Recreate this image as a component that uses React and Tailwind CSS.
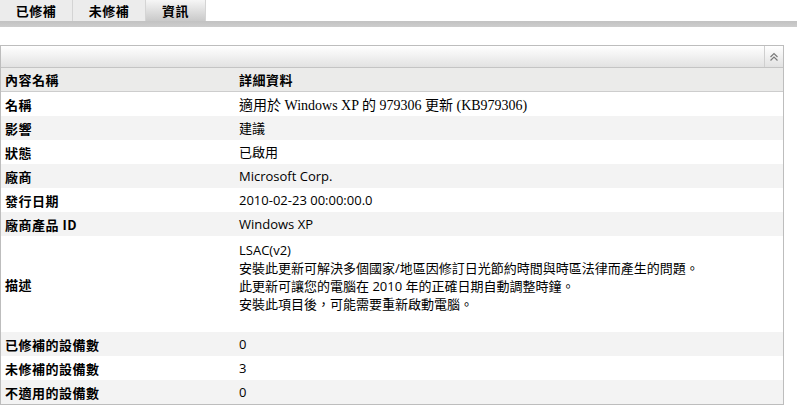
import React from "react";

const labelFont = { fontFamily: '"Noto Sans CJK TC", "Noto Sans", sans-serif' };

function Row({ label, children, shade, h = "h-[24px]", serif }) {
  return (
    <div className={`flex items-center ${h} ${shade ? "bg-[#f3f3f3]" : "bg-white"}`}>
      <div className="w-[238px] shrink-0 pl-[4px] text-[13px] font-bold tracking-[0.5px] text-black leading-none">
        {label}
      </div>
      <div
        className={`flex-1 text-black ${serif ? "pt-[3px] text-[14px] font-['Liberation_Serif','Noto_Sans_CJK_TC',serif]" : "text-[13px] font-['Open_Sans','Noto_Sans_CJK_TC',sans-serif]"} leading-none`}
      >
        {children}
      </div>
    </div>
  );
}

export default function App() {
  return (
    <div className="w-[797px] h-[409px] bg-white overflow-hidden" style={labelFont}>
      {/* tabs */}
      <div className="flex h-[21px]">
        <div className="w-[73px] flex items-center justify-center bg-[#ececec] border-r border-[#d4d4d4] text-[13px] font-bold tracking-[0.5px]">
          已修補
        </div>
        <div className="w-[73px] flex items-center justify-center bg-[#ececec] border-r border-[#d4d4d4] text-[13px] font-bold tracking-[0.5px]">
          未修補
        </div>
        <div className="w-[60px] flex items-center justify-center bg-gradient-to-b from-[#f6f6f6] to-[#c9c9c9] border-r border-[#d4d4d4] text-[13px] font-bold tracking-[0.5px]">
          資訊
        </div>
      </div>
      <div className="h-[6px] bg-gradient-to-b from-[#c2c2c2] to-[#cdcdcd]" />

      {/* panel */}
      <div className="mt-[18px] w-[784px] border border-[#bdbdbd]">
        <div className="flex h-[22px] bg-gradient-to-b from-[#ffffff] to-[#e2e2e2] border-b border-[#c4c4c4]">
          <div className="flex-1" />
          <div className="w-[19px] border-l border-[#cfcfcf] flex items-center justify-center">
            <svg width="10" height="10" viewBox="0 0 10 10" fill="none" stroke="#7a7a7a" strokeWidth="1.2">
              <path d="M1.5 5 L5 1.5 L8.5 5" />
              <path d="M1.5 8.5 L5 5 L8.5 8.5" />
            </svg>
          </div>
        </div>
        <div className="flex items-center h-[24px] bg-[#ebebea] border-b border-[#cdcdcd]">
          <div className="w-[238px] shrink-0 pl-[4px] text-[13px] font-bold tracking-[0.5px] leading-none">內容名稱</div>
          <div className="flex-1 text-[13px] font-bold tracking-[0.5px] leading-none">詳細資料</div>
        </div>
        <Row label="名稱" serif>適用於 Windows XP 的 979306 更新 (KB979306)</Row>
        <Row label="影響" shade>建議</Row>
        <Row label="狀態">已啟用</Row>
        <Row label="廠商" shade>Microsoft Corp.</Row>
        <Row label="發行日期">2010-02-23 00:00:00.0</Row>
        <Row label="廠商產品 ID" shade>Windows XP</Row>
        <Row label="描述" h="h-[96px]">
          <div className="leading-[18px] pt-[5px] pb-[19px]">
            <div>LSAC(v2)</div>
            <div>安裝此更新可解決多個國家/地區因修訂日光節約時間與時區法律而產生的問題。</div>
            <div>此更新可讓您的電腦在 2010 年的正確日期自動調整時鐘。</div>
            <div>安裝此項目後，可能需要重新啟動電腦。</div>
          </div>
        </Row>
        <Row label="已修補的設備數" shade>0</Row>
        <Row label="未修補的設備數">3</Row>
        <Row label="不適用的設備數" shade>0</Row>
      </div>
    </div>
  );
}
